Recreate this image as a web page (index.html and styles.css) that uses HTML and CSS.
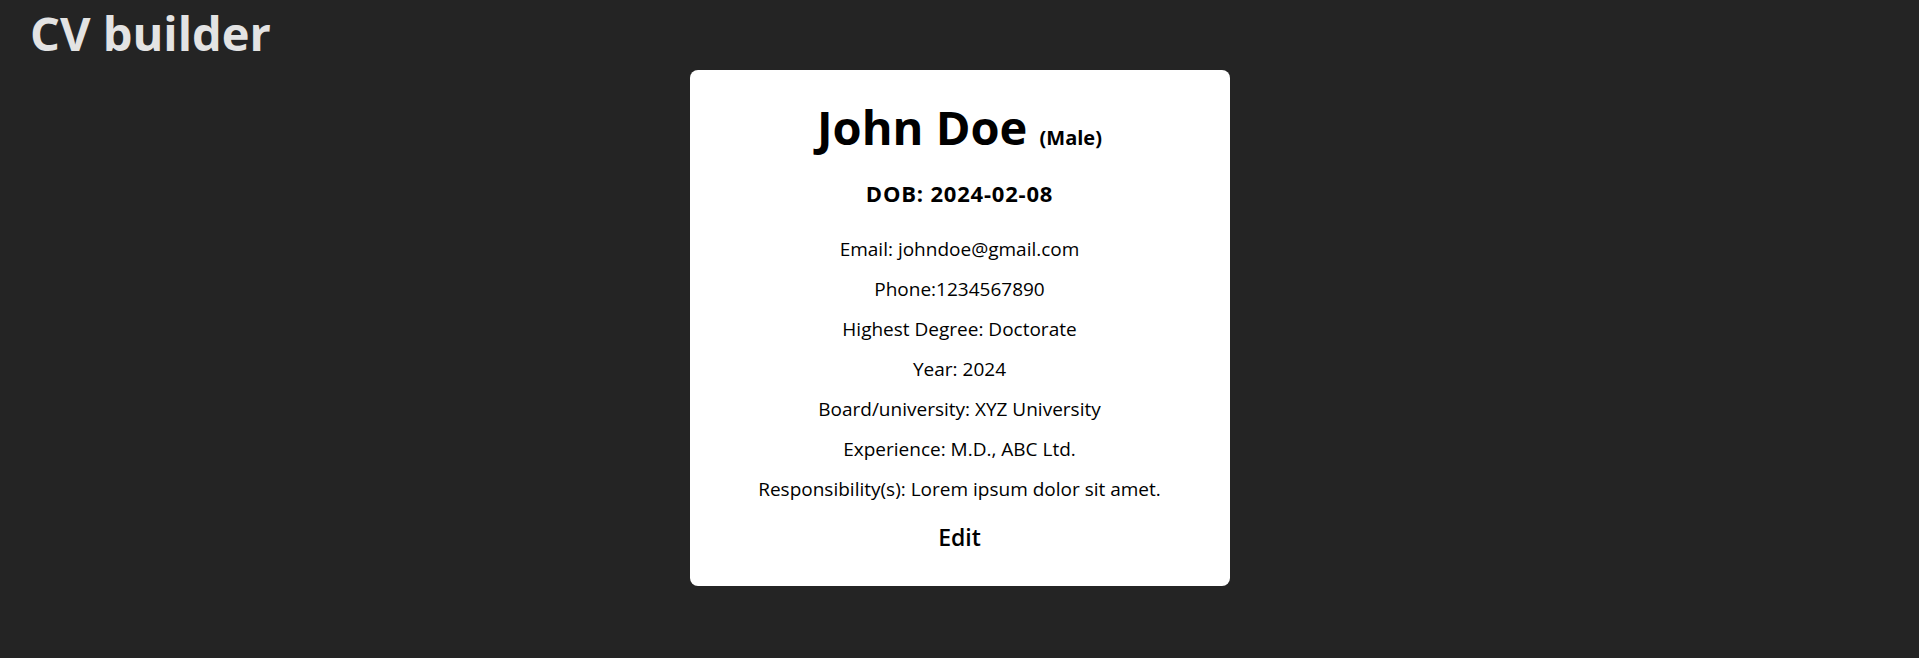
FILE: index.html
```html
<!DOCTYPE html>
<html lang="en">
<head>
<meta charset="utf-8">
<title>CV builder</title>
<link rel="stylesheet" href="styles.css">
</head>
<body>
<header class="app-header">
  <h1 class="app-title">CV builder</h1>
</header>
<main class="app-main">
  <section class="cv-card">
    <h2 class="cv-name">John Doe <span class="cv-gender">(Male)</span></h2>
    <h3 class="cv-dob">DOB: 2024-02-08</h3>
    <div class="cv-details">
      <p class="cv-line">Email: johndoe@gmail.com</p>
      <p class="cv-line">Phone:1234567890</p>
      <p class="cv-line">Highest Degree: Doctorate</p>
      <p class="cv-line">Year: 2024</p>
      <p class="cv-line">Board/university: XYZ University</p>
      <p class="cv-line">Experience: M.D., ABC Ltd.</p>
      <p class="cv-line">Responsibility(s): Lorem ipsum dolor sit amet.</p>
    </div>
    <button class="cv-edit" type="button">Edit</button>
  </section>
</main>
</body>
</html>
```

FILE: styles.css
```css
* {
  box-sizing: border-box;
}

body {
  margin: 0;
  background: #242424;
  color: rgba(255, 255, 255, 0.87);
  font-family: "Open Sans", "Noto Sans", sans-serif;
}

.app-header {
  padding: 5px 0 0 30px;
  height: 70px;
}

.app-title {
  margin: 0;
  font-size: 47px;
  font-weight: 700;
  line-height: 56px;
  color: #e3e3e3;
}

.app-main {
  display: flex;
  justify-content: center;
}

.cv-card {
  width: 540px;
  height: 516px;
  background: #ffffff;
  color: #000000;
  border-radius: 8px;
  display: flex;
  flex-direction: column;
  align-items: center;
  padding-top: 27px;
  text-align: center;
}

.cv-name {
  margin: 0;
  font-size: 47px;
  font-weight: 700;
  line-height: 60px;
}

.cv-gender {
  font-size: 20px;
  font-weight: 700;
}

.cv-dob {
  margin: 5px 0 0;
  font-size: 22px;
  font-weight: 700;
  letter-spacing: 0.8px;
  line-height: 40px;
}

.cv-details {
  margin-top: 16px;
  display: flex;
  flex-direction: column;
}

.cv-line {
  margin: 0;
  font-size: 19px;
  line-height: 40px;
}

.cv-edit {
  margin-top: 8px;
  border: 0;
  background: transparent;
  color: #000000;
  font-family: inherit;
  font-size: 23px;
  font-weight: 600;
  line-height: 40px;
  padding: 0 16px;
}
```
